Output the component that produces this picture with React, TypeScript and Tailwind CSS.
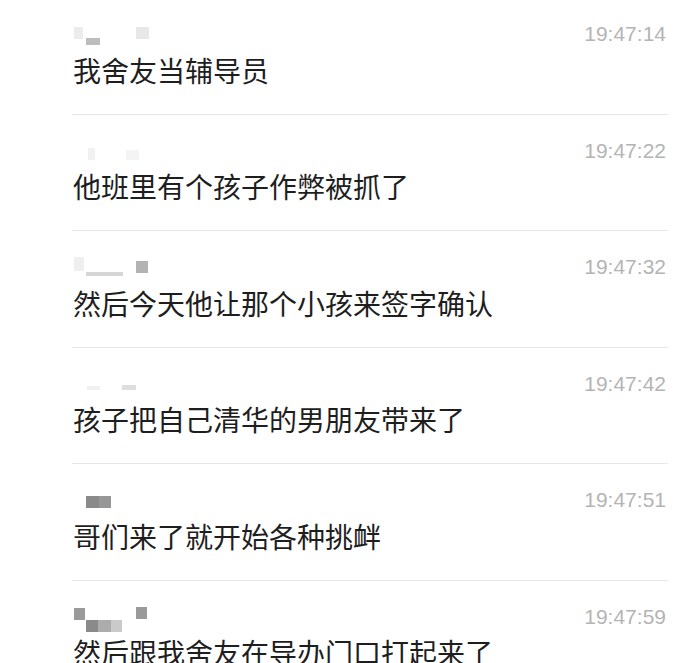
type Blob = { x: number; y: number; w: number; h: number; c: string }

type Msg = {
  time: string
  text: string
  name: Blob[]
}

const messages: Msg[] = [
  {
    time: '19:47:14',
    text: '我舍友当辅导员',
    name: [
      { x: 2, y: 5, w: 9, h: 12, c: '#ececec' },
      { x: 14, y: 16, w: 14, h: 7, c: '#bdbdbd' },
      { x: 64, y: 5, w: 13, h: 12, c: '#e8e8e8' },
    ],
  },
  {
    time: '19:47:22',
    text: '他班里有个孩子作弊被抓了',
    name: [
      { x: 16, y: 9, w: 7, h: 12, c: '#f1f1f1' },
      { x: 54, y: 11, w: 13, h: 10, c: '#f4f4f4' },
    ],
  },
  {
    time: '19:47:32',
    text: '然后今天他让那个小孩来签字确认',
    name: [
      { x: 2, y: 2, w: 10, h: 14, c: '#efefef' },
      { x: 14, y: 17, w: 37, h: 4, c: '#d6d6d6' },
      { x: 64, y: 6, w: 12, h: 12, c: '#b3b3b3' },
    ],
  },
  {
    time: '19:47:42',
    text: '孩子把自己清华的男朋友带来了',
    name: [
      { x: 15, y: 14, w: 13, h: 4, c: '#f0f0f0' },
      { x: 50, y: 13, w: 14, h: 5, c: '#dedede' },
    ],
  },
  {
    time: '19:47:51',
    text: '哥们来了就开始各种挑衅',
    name: [
      { x: 14, y: 8, w: 13, h: 12, c: '#8a8a8a' },
      { x: 27, y: 8, w: 12, h: 12, c: '#979797' },
    ],
  },
  {
    time: '19:47:59',
    text: '然后跟我舍友在导办门口打起来了',
    name: [
      { x: 2, y: 3, w: 11, h: 12, c: '#9a9a9a' },
      { x: 14, y: 15, w: 12, h: 12, c: '#8a8a8a' },
      { x: 26, y: 15, w: 13, h: 12, c: '#acacac' },
      { x: 39, y: 15, w: 11, h: 12, c: '#cacaca' },
      { x: 64, y: 2, w: 11, h: 12, c: '#9a9a9a' },
    ],
  },
]

// blurred sender name, drawn as pixel blocks
function Redacted({ blobs }: { blobs: Blob[] }) {
  return (
    <svg width="90" height="30" viewBox="0 0 90 30" className="block shrink-0">
      {blobs.map((b, i) => (
        <rect key={i} x={b.x} y={b.y} width={b.w} height={b.h} fill={b.c} />
      ))}
    </svg>
  )
}

export default function App() {
  return (
    <div className="min-h-screen bg-white pl-[72px] pr-[18px]">
      {messages.map((m, i) => (
        <div
          key={m.time}
          className={`border-b border-[#e6e6e6] pb-[26px] ${i === 0 ? 'pt-[22px]' : 'pt-[24px]'}`}
        >
          <div className="flex h-[24px] items-start justify-between">
            <Redacted blobs={m.name} />
            <span className="pr-[2px] text-[21px] leading-[24px] text-[#b4b4b4] font-['Liberation_Sans',sans-serif]">
              {m.time}
            </span>
          </div>
          <div className="mt-[5.5px] pl-[1px] text-[28px] leading-[36px] text-[#1e1e1e] font-['Noto_Sans_CJK_SC','Noto_Sans',sans-serif] whitespace-nowrap">
            {m.text}
          </div>
        </div>
      ))}
    </div>
  )
}
